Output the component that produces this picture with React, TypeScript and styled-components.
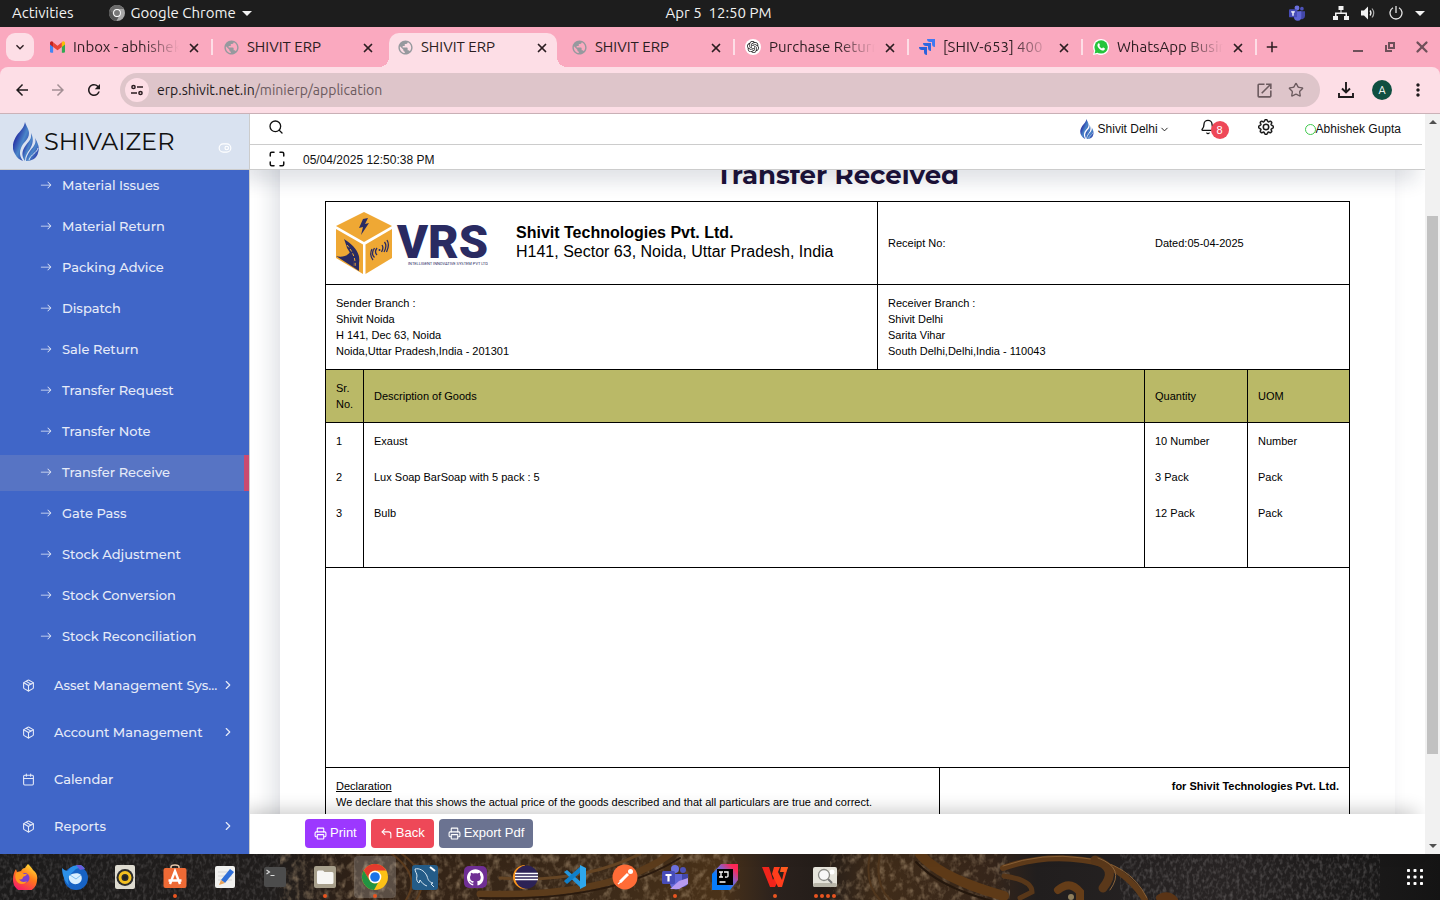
import React from "react";
import styled, { createGlobalStyle, css } from "styled-components";
import {
  Bell,
  Calendar,
  ChevronDown,
  ChevronRight,
  CornerUpLeft,
  Maximize,
  Package,
  Printer,
  Search,
  Star,
  ToggleRight,
  X,
} from "lucide-react";
import { BsArrowRight, BsGear } from "react-icons/bs";
import {
  MdArrowBack,
  MdArrowForward,
  MdMoreVert,
  MdOpenInNew,
  MdPublic,
  MdRefresh,
  MdAdd,
  MdExpandMore,
} from "react-icons/md";
import { SiGithub, SiOpenai } from "react-icons/si";

const systemFont = `Ubuntu, "Noto Sans", "Open Sans", sans-serif`;
const pageFont = `"Liberation Sans", Arial, sans-serif`;
const brandFont = `Montserrat, Inter, sans-serif`;

const GlobalStyle = createGlobalStyle`
  *, *::before, *::after { box-sizing: border-box; }
  body { margin: 0; background: #1d1d1d; font-family: ${pageFont}; }
  button { font: inherit; color: inherit; border: 0; padding: 0; background: none; cursor: pointer; }
  a { color: inherit; text-decoration: none; }
  svg { display: block; flex: none; }
  h1, p, ul { margin: 0; padding: 0; }
  ul { list-style: none; }
`;

const Desktop = styled.div`
  display: flex;
  flex-direction: column;
  height: 100vh;
  overflow: hidden;
`;

/* ---------- system bar ---------- */

const SystemBar = styled.header`
  display: grid;
  grid-template-columns: 1fr auto 1fr;
  align-items: center;
  height: 27px;
  flex: none;
  padding: 0 15px 1px 12px;
  background: #1d1d1d;
  color: #f2f2f2;
  font: 15px/20px ${systemFont};
  white-space: pre;
`;

const SystemGroup = styled.div<{ $end?: boolean }>`
  display: flex;
  align-items: center;
  gap: ${(p) => (p.$end ? "12px" : "35px")};
  justify-content: ${(p) => (p.$end ? "flex-end" : "flex-start")};
`;

const SystemButton = styled.button`
  display: flex;
  align-items: center;
  gap: 6px;
`;

const TeamsSlot = styled.span`
  margin-right: 16px;
`;

/* ---------- browser ---------- */

const TabStrip = styled.div`
  display: flex;
  align-items: center;
  height: 40px;
  flex: none;
  padding: 0 12px 0 6px;
  background: #faa9bf;
  color: #2b1d21;
  font: 15px/20px ${systemFont};
`;

const TabSearch = styled.button`
  display: grid;
  place-items: center;
  width: 28px;
  height: 28px;
  margin-right: 6px;
  border-radius: 9px;
  background: #fddee6;
`;

const TabItem = styled.div<{ $active?: boolean; $divider?: boolean }>`
  position: relative;
  display: flex;
  align-items: center;
  gap: 8px;
  flex: 0 1 174px;
  min-width: 0;
  height: 40px;
  padding: 0 15px 0 9px;
  isolation: isolate;
  ${(p) =>
    p.$active &&
    css`
      &::before {
        content: "";
        position: absolute;
        z-index: -1;
        inset: 6px 5px 0 1px;
        border-radius: 10px 10px 0 0;
        background: #fddee6;
      }
      &::after {
        content: "";
        position: absolute;
        z-index: -1;
        left: -9px;
        right: -5px;
        bottom: 0;
        height: 10px;
        background:
          radial-gradient(circle at 0 0, transparent 10px, #fddee6 10px) left / 10px 10px no-repeat,
          radial-gradient(circle at 100% 0, transparent 10px, #fddee6 10px) right / 10px 10px no-repeat;
      }
    `}
  ${(p) =>
    p.$divider &&
    css`
      &::after {
        content: "";
        position: absolute;
        right: 1px;
        top: 12px;
        width: 2px;
        height: 16px;
        background: #fddee6;
      }
    `}
`;

const TabTitle = styled.button<{ $fade?: boolean }>`
  flex: 1;
  min-width: 0;
  overflow: hidden;
  text-align: left;
  white-space: nowrap;
  ${(p) => p.$fade && css`mask-image: linear-gradient(90deg, #000 65%, transparent 100%);`}
`;

const TabIcon = styled.span`
  display: grid;
  place-items: center;
  width: 16px;
  height: 16px;
  flex: none;
  color: #96999e;
`;

const IconButton = styled.button<{ $size?: number; $faded?: boolean }>`
  display: grid;
  place-items: center;
  flex: none;
  width: ${(p) => p.$size ?? 20}px;
  height: ${(p) => p.$size ?? 20}px;
  opacity: ${(p) => (p.$faded ? 0.4 : 1)};
`;

const NewTab = styled(IconButton)`
  margin-left: 4px;
  svg { stroke: none; }
`;

const WindowControls = styled.div`
  display: flex;
  gap: 12px;
  margin-left: auto;
  margin-right: -4px;
  color: #6e5059;
`;

const ToolbarBack = styled.div`
  flex: none;
  background: #faa9bf;
`;

const Toolbar = styled.div`
  display: flex;
  align-items: center;
  height: 47px;
  padding: 0 12px;
  border-bottom: 1px solid #cbb2b8;
  border-radius: 8px 8px 0 0;
  background: #fddee6;
  color: #1f1a1c;
`;

const NavButtons = styled.div`
  display: flex;
  gap: 16px;
  margin-right: 16px;
`;

const AddressBar = styled.div`
  display: flex;
  align-items: center;
  flex: 1;
  min-width: 0;
  height: 34px;
  padding: 0 14px 0 5px;
  border-radius: 17px;
  background: #dec5ca;
  font: 14px/20px ${systemFont};
`;

const SiteInfo = styled.button`
  display: grid;
  place-items: center;
  width: 24px;
  height: 24px;
  margin-right: 8px;
  border-radius: 50%;
  background: #fddee6;
`;

const Address = styled.a`
  flex: 1;
  min-width: 0;
  overflow: hidden;
  white-space: nowrap;
  span { color: #6b5a5e; }
`;

const AddressActions = styled.div`
  display: flex;
  gap: 12px;
  color: #6b5a5e;
`;

const ToolbarActions = styled.div`
  display: flex;
  align-items: center;
  gap: 16px;
  margin-left: 16px;
`;

const ProfileButton = styled.button`
  width: 20px;
  height: 20px;
  border-radius: 50%;
  background: #0f4f41;
  color: #fff;
  font: 11px/20px ${systemFont};
`;

/* ---------- application ---------- */

const Viewport = styled.div`
  display: flex;
  flex: 1;
  min-height: 0;
  background: #fff;
`;

const Sidebar = styled.aside`
  position: relative;
  z-index: 3;
  display: flex;
  flex-direction: column;
  width: 250px;
  flex: none;
  overflow: hidden;
  border-right: 1px solid #ccc;
  background: #4066c8;
  color: #e6ebf8;
`;

const Brand = styled.div`
  position: relative;
  z-index: 1;
  display: flex;
  align-items: center;
  height: 56px;
  flex: none;
  padding: 0 17px 0 13px;
  border-bottom: 1px solid #ccc;
  background: #d9e2f0;
`;

const BrandName = styled.a`
  flex: 1;
  padding-left: 5px;
  color: #111;
  font: 400 24px/32px ${brandFont};
`;

const CollapseButton = styled.button`
  align-self: flex-end;
  margin-bottom: 14px;
  color: #fff;
`;

const Menu = styled.ul`
  display: flex;
  flex-direction: column;
  gap: 5px;
  font: 500 13px/18px ${brandFont};
`;

const SubMenu = styled(Menu)`
  margin-top: -2px;
  margin-bottom: 10px;
`;

const SubLink = styled.a<{ $active?: boolean }>`
  display: flex;
  align-items: center;
  gap: 10px;
  height: 36px;
  padding: 0 0 2px 40px;
  border-right: 5px solid ${(p) => (p.$active ? "#cb4a70" : "transparent")};
  background: ${(p) => (p.$active ? "#5774c4" : "transparent")};
`;

const MainLink = styled.a`
  display: flex;
  align-items: center;
  height: 42px;
  padding: 0 14px 2px 22px;
  span {
    flex: 1;
    min-width: 0;
    padding-left: 19px;
    overflow: hidden;
    white-space: nowrap;
    text-overflow: ellipsis;
  }
`;

const Main = styled.main`
  position: relative;
  display: flex;
  flex-direction: column;
  flex: 1;
  min-width: 0;
`;

const AppHeader = styled.div`
  position: relative;
  z-index: 2;
  height: 56px;
  flex: none;
  border-bottom: 1px solid #ccc;
  background: #fff;
  box-shadow: -8px 12px 18px 0 rgba(25, 42, 70, 0.13);
  color: #111;
  font-size: 12px;
  line-height: 16px;
`;

const HeaderRow = styled.div<{ $second?: boolean }>`
  display: flex;
  align-items: center;
  height: ${(p) => (p.$second ? "24px" : "31px")};
  margin-right: 3px;
  padding: ${(p) => (p.$second ? "6px 0 0 18px" : "0 21px 0 18px")};
  gap: ${(p) => (p.$second ? "19px" : "0")};
  border-bottom: ${(p) => (p.$second ? "0" : "1px solid #ccc")};
`;

const HeaderTools = styled.div`
  display: flex;
  align-items: center;
  margin-left: auto;
`;

const HeaderIcon = styled(IconButton)`
  position: relative;
  width: 16px;
  height: 16px;
  margin-bottom: 4px;
`;

const BranchButton = styled.button`
  display: flex;
  align-items: center;
  gap: 4px;
  margin-right: 30px;
  span { display: flex; align-items: center; gap: 1px; }
`;

const BellButton = styled(HeaderIcon)`
  margin-right: 42px;
`;

const Badge = styled.span`
  position: absolute;
  left: 11px;
  top: 2px;
  width: 18px;
  height: 18px;
  border-radius: 50%;
  background: #ee4858;
  color: #fff;
  font-size: 11px;
  line-height: 18px;
`;

const UserButton = styled.button`
  display: flex;
  align-items: center;
  margin-left: 31px;
  &::before {
    content: "";
    width: 11px;
    height: 11px;
    border: 1px solid #3fc94d;
    border-radius: 50%;
  }
`;

const Scroll = styled.div`
  flex: 1;
  min-height: 0;
  overflow: hidden;
`;

const Sheet = styled.section`
  margin: -40px 30px 0;
  padding: 29px 45px 40px;
  background: #fff;
  box-shadow: -8px 12px 18px 0 rgba(25, 42, 70, 0.13);
  color: #000;
  font-size: 11px;
  line-height: 16px;
`;

const SheetTitle = styled.h1`
  margin-bottom: 10px;
  color: #1b1036;
  text-align: center;
  font: 700 26px/32px ${brandFont};
`;

const Voucher = styled.div`
  border: 1px solid #000;
`;

const Split = styled.div<{ $cols: string }>`
  display: grid;
  grid-template-columns: ${(p) => p.$cols};
`;

const Cell = styled.div<{ $divided?: boolean; $ruled?: boolean; $right?: boolean }>`
  padding: 10px;
  border-right: ${(p) => (p.$divided ? "1px solid #000" : "0")};
  border-bottom: ${(p) => (p.$ruled ? "1px solid #000" : "0")};
  text-align: ${(p) => (p.$right ? "right" : "left")};
`;

const CompanyCell = styled(Cell)`
  display: flex;
  align-items: center;
  gap: 28px;
  font-size: 16px;
  line-height: 19px;
  p { padding-bottom: 2px; }
`;

const ReceiptCell = styled(Cell)`
  display: grid;
  grid-template-columns: 267fr 184fr;
  align-items: center;
`;

const Items = styled.table`
  width: 100%;
  table-layout: fixed;
  border-spacing: 0;
  th, td {
    padding: 10px;
    border-right: 1px solid #000;
    text-align: left;
    vertical-align: middle;
    font-weight: 400;
  }
  th:last-child, td:last-child { border-right: 0; }
  th { background: #bab967; border-bottom: 1px solid #000; }
  tbody tr:last-child td { padding-bottom: 46px; border-bottom: 1px solid #000; }
`;

const Col = styled.col<{ $width?: number }>`
  width: ${(p) => (p.$width ? `${p.$width}px` : "auto")};
`;

const Blank = styled.div`
  height: 200px;
  border-bottom: 1px solid #000;
`;

const ActionBar = styled.footer`
  position: relative;
  z-index: 2;
  display: flex;
  align-items: center;
  gap: 5px;
  height: 40px;
  flex: none;
  padding: 0 55px 2px;
  background: #fff;
  box-shadow: -8px -4px 18px 0 rgba(0, 0, 0, 0.2);
`;

const ActionButton = styled.button<{ $color: string }>`
  display: flex;
  align-items: center;
  gap: 3px;
  height: 29px;
  padding: 0 9px;
  border-radius: 4px;
  background: ${(p) => p.$color};
  color: #fff;
  font-size: 13px;
  line-height: 16px;
`;

const ScrollTrack = styled.div`
  position: relative;
  z-index: 3;
  display: flex;
  flex-direction: column;
  align-items: center;
  justify-content: space-between;
  width: 15px;
  flex: none;
  padding: 6px 0;
  background: #f1f1f1;
`;

const ThumbLane = styled.div`
  display: grid;
  grid-template-rows: 87fr 538fr 85fr;
  flex: 1;
  width: 11px;
  margin: 5px 0;
  &::before {
    content: "";
    grid-row: 2;
    background: #c1c1c1;
  }
`;

/* ---------- dock ---------- */

const Dock = styled.nav`
  position: relative;
  display: flex;
  align-items: center;
  justify-content: space-between;
  height: 46px;
  flex: none;
  padding-right: 15px;
  background: #1a1816;
  isolation: isolate;
`;

const Wallpaper = styled.svg`
  position: absolute;
  z-index: -1;
  inset: 0;
  width: 100%;
  height: 100%;
`;

const DockApps = styled.div`
  display: flex;
`;

const DockApp = styled.button<{ $focused?: boolean }>`
  position: relative;
  display: grid;
  place-items: center;
  width: 42px;
  height: 42px;
  margin: 0 4px;
  border-radius: 4px;
  background: ${(p) => (p.$focused ? "rgba(255,255,255,.2)" : "none")};
`;

const RunningDots = styled.span`
  position: absolute;
  bottom: 0;
  left: 0;
  right: 0;
  display: flex;
  justify-content: center;
  gap: 2px;
  i {
    width: 4px;
    height: 4px;
    border-radius: 50%;
    background: #e95420;
  }
`;

/* ---------- drawings ---------- */

const Caret = ({ w = 10, color = "#f2f2f2", up = false }) => (
  <svg width={w} height={w / 2} viewBox="0 0 10 5" aria-hidden>
    <path d={up ? "M0 5h10L5 0z" : "M0 0h10L5 5z"} fill={color} />
  </svg>
);

const Flame = ({ w, h, id }: { w: number; h: number; id: string }) => (
  <svg width={w} height={h} viewBox="0 0 26 39" aria-hidden>
    <defs>
      <linearGradient id={id} x1="0" y1="0" x2="1" y2="1">
        <stop offset="0" stopColor="#1a0a96" />
        <stop offset=".3" stopColor="#2a3aa8" />
        <stop offset=".55" stopColor="#4a86c9" />
        <stop offset="1" stopColor="#1c149a" />
      </linearGradient>
    </defs>
    <g fill={`url(#${id})`}>
      <path d="M12 0c-1 6-5 9-8 13-4 6-6 13-2 19 2 4 5 6 8 7-3-4-4-8-2-13 2-6 8-8 8-15 0-4-3-7-4-11z" />
      <path d="M18 11c1 6-2 8-5 12-4 5-5 11-1 16 0-5 2-8 5-12 3-5 4-10 1-16z" />
      <path d="M22 16c2 6-2 9-5 13-2 3-4 6-4 10 6 0 11-3 12-8 2-5 0-10-3-15z" />
    </g>
    <path d="M25 26c-1 5-7 6-9 12" stroke="#d9e2f0" strokeWidth="1" fill="none" />
  </svg>
);

const GmailIcon = () => (
  <svg width="15" height="12" viewBox="0 0 24 18" aria-hidden>
    <path d="M0 3v13q0 2 2 2h3V6z" fill="#4285f4" />
    <path d="M24 3v13q0 2-2 2h-3V6z" fill="#34a853" />
    <path d="M5 1.500l7 5.500 7-5.500V9l-7 5-7-5z" fill="#ea4335" />
    <path d="M0 3c0-3 3-4 5-2v8L0 5z" fill="#c5221f" />
    <path d="M24 3c0-3-3-4-5-2v8l5-4z" fill="#fbbc04" />
  </svg>
);

const JiraIcon = () => (
  <svg width="16" height="16" viewBox="0 0 16 16" aria-hidden>
    <path d="M8 0h8v8a3 3 0 0 1-3-3V3h-2a3 3 0 0 1-3-3z" fill="#3f78f2" />
    <path d="M4 4h8v8a3 3 0 0 1-3-3V7H7a3 3 0 0 1-3-3z" fill="#2f68e0" />
    <path d="M0 8h8v8a3 3 0 0 1-3-3v-2H3a3 3 0 0 1-3-3z" fill="#2a62db" />
  </svg>
);

const RoundIcon = styled.span<{ $color: string }>`
  display: grid;
  place-items: center;
  width: 16px;
  height: 16px;
  border-radius: 50%;
  background: #fff;
  color: ${(p) => p.$color};
`;

const WhatsAppIcon = () => (
  <svg width="16" height="16" viewBox="0 0 16 16" aria-hidden>
    <path d="M8 0a8 8 0 1 1-3.800 15L0 16l1.100-4A8 8 0 0 1 8 0z" fill="#fff" />
    <circle cx="8.100" cy="7.900" r="6.700" fill="#25c43c" />
    <path d="m1.600 14.400.9-3.400 2.500 2.500z" fill="#25c43c" />
    <path d="M5.800 4.200c.8 0 1 1.700 1.200 1.900l-.7 1c.6 1.200 1.500 2 2.700 2.500l.9-1c.3-.1 2 .7 2 .9 0 1.800-1.500 2.400-2.800 2C6.600 10.600 5 8.700 4.500 7c-.2-1.300.4-2.600 1.300-2.800z" fill="#fff" />
  </svg>
);

const ChromeIcon = ({ size, mono = false }: { size: number; mono?: boolean }) => (
  <svg width={size} height={size} viewBox="0 0 26 26" aria-hidden>
    <circle cx="13" cy="13" r="13" fill={mono ? "#a8a8a8" : "#fbc116"} />
    <path d="M1.700 6.500A13 13 0 0 1 24.300 6.500H13a6.500 6.500 0 0 0-5.600 9.700z" fill={mono ? "#6c6c6c" : "#e33b2e"} />
    <path d="M1.700 6.500 7.400 16.300a6.500 6.500 0 0 0 8.600 2.500L12 26A13 13 0 0 1 1.700 6.500z" fill={mono ? "#555" : "#229342"} />
    <circle cx="13" cy="13" r="6.300" fill="#fff" />
    <circle cx="13" cy="13" r="4.800" fill={mono ? "#777" : "#1a73e8"} />
  </svg>
);

const TeamsIcon = ({ size, badge = false }: { size: number; badge?: boolean }) => (
  <svg width={size} height={size} viewBox="0 0 26 26" aria-hidden>
    <circle cx="13" cy="5" r="4" fill="#6b70dd" />
    <circle cx="21" cy="6" r="3" fill="#4d52b8" />
    <path d="M17 10h9v8a5 5 0 0 1-9 3z" fill="#4247a8" />
    <path d="M8 10h12v9a6 6 0 0 1-12 1z" fill="#5f64d6" />
    <rect y="7" width="13" height="13" rx="1.500" fill="#474cb8" />
    <path d="M3.500 10h6v2H7.600v5.500H5.400V12H3.500z" fill="#fff" />
    {badge && <path d="M8 25 17 17l9-3v6l-9 5z" fill="#b79af0" />}
  </svg>
);

const NetworkIcon = () => (
  <svg width="16" height="14" viewBox="0 0 16 14" fill="#f2f2f2" aria-hidden>
    <path d="M5.500 0h5v4h-2v2.500H14V10h2v4h-5v-4h1.500V8h-9v2H5v4H0v-4h2V6.500h5.500V4h-2z" />
  </svg>
);

const VolumeIcon = () => (
  <svg width="16" height="14" viewBox="0 0 16 14" aria-hidden>
    <path d="M0 4.500h3L7 .5v13l-4-4H0z" fill="#f2f2f2" />
    <path d="M9 4.500q2 2.500 0 5" stroke="#f2f2f2" fill="none" strokeWidth="1.300" />
    <path d="M11 2.500q3.500 4.500 0 9" stroke="#aaa" fill="none" strokeWidth="1.200" />
  </svg>
);

const PowerIcon = () => (
  <svg width="14" height="14" viewBox="0 0 14 14" stroke="#e6e6e6" strokeWidth="1.300" fill="none" aria-hidden>
    <path d="M4 1.800a6 6 0 1 0 6 0M7 0v7" />
  </svg>
);

const TuneIcon = () => (
  <svg width="12" height="12" viewBox="0 0 12 12" stroke="#2b1d21" strokeWidth="1.500" fill="none" aria-hidden>
    <circle cx="2.500" cy="3" r="1.600" />
    <path d="M6 3h6M0 9h6" />
    <circle cx="9.500" cy="9" r="1.600" />
  </svg>
);

const MinimizeIcon = () => (
  <svg width="10" height="12" viewBox="0 0 10 12" stroke="currentColor" strokeWidth="2" aria-hidden>
    <path d="M0 10h10" />
  </svg>
);

const RestoreIcon = () => (
  <svg width="10" height="10" viewBox="0 0 10 10" stroke="currentColor" strokeWidth="2" fill="none" aria-hidden>
    <path d="M4 1h5v5H4zM1 3v6h6" />
  </svg>
);

const VrsLogo = () => (
  <svg width="152" height="62" viewBox="0 0 152 62" role="img" aria-label="VRS">
    <g fill="#efa834">
      <path d="M28 0 56 14 28 30 0 14z" />
      <path d="M0 17 27 32.500V62L0 46z" />
      <path d="M56 17 29.500 32.500V62L56 46z" />
    </g>
    <g fill="#2a2b62">
      <path d="m27 7 5-1-3 6 4-1-8 12 2-8-4 1z" />
      <path d="M8 27c9 6 17 13 15 24v8l-6-4c2-8-3-14-6-19-1-4-2-6-3-9z" />
      <path d="M0 44c5 2 12 0 14-4 3 4 5 9 3 15z" />
    </g>
    <path d="M11 33c6 7 9 14 8 23" stroke="#efa834" strokeWidth="1" fill="none" strokeDasharray="3 2" />
    <g stroke="#2a2b62" strokeWidth="1.300" fill="none">
      <path d="M41 36q-3 4 0 7M38.500 36q-4 6 0 9.500M36 37q-3 6 1 11M46 33q2 3-.5 7M48.500 30q3 4-.5 10M51 28q3 5-.5 12" />
    </g>
    <circle cx="43.500" cy="38" r="1" fill="#2a2b62" />
    <text x="61" y="46" fontFamily="Roboto, sans-serif" fontWeight="900" fontSize="47" fill="#2a2b62">VRS</text>
    <text x="72" y="53" fontFamily="Roboto, sans-serif" fontWeight="400" fontSize="4" fill="#2a2b62">INTELLIGENT INNOVATIVE SYSTEM PVT LTD.</text>
  </svg>
);

const art = (children: React.ReactNode) => (
  <svg width="26" height="26" viewBox="0 0 26 26" aria-hidden>
    {children}
  </svg>
);

const FirefoxIcon = () =>
  art(
    <>
      <defs>
        <linearGradient id="fox" x1=".8" y1="0" x2=".3" y2="1">
          <stop offset="0" stopColor="#ffe53b" />
          <stop offset=".45" stopColor="#ff7a1a" />
          <stop offset="1" stopColor="#f5156c" />
        </linearGradient>
      </defs>
      <path d="M16 0c2 2 4 4 5 6 3 2 5 6 4 10a12 12 0 0 1-24 0C1 11 2 8 4 5l1 3 4-1c1-2 2-3 4-3 1-2 2-3 3-4z" fill="url(#fox)" />
      <circle cx="12.500" cy="14" r="5" fill="#7a3fd0" />
      <path d="M4 9c3-2 6-1 8 1h3c-1 2-3 2-4 3 0 2-2 3-4 2 1 3 5 4 8 2-2 4-9 4-11-1-1-3-1-5 0-7z" fill="#ff9a1f" />
    </>,
  );

const ThunderbirdIcon = () =>
  art(
    <>
      <circle cx="14" cy="14" r="12" fill="#1763c4" />
      <path d="M0 4c2 2 4 3 6 3 2-4 6-6 11-6 3 0 5 2 6 4-5-2-9-1-11 2-5 4-7 8-5 14C3 18 0 11 0 4z" fill="#2b8fe8" />
      <path d="M14 1h5l4 4-5 1z" fill="#6c5bd8" />
      <path d="M7 12c2-3 10-4 12-1 2 4 0 8-4 9-5 1-9-3-8-8z" fill="#d9efff" />
      <path d="m8 11 6 4 5-4" stroke="#7fbdf0" fill="none" />
    </>,
  );

const RhythmboxIcon = () =>
  art(
    <>
      <rect x="3" y="1" width="20" height="24" rx="2" fill="#dedbd0" />
      <circle cx="13" cy="13.500" r="8.500" fill="#2c2c2c" />
      <circle cx="13" cy="13.500" r="5" fill="none" stroke="#f4c020" strokeWidth="3" />
      <circle cx="13" cy="13.500" r="2" fill="#222" />
    </>,
  );

const SoftwareIcon = () =>
  art(
    <>
      <path d="M9 5V3q0-2 4-2t4 2v2" stroke="#e8c9ad" strokeWidth="1.500" fill="none" />
      <rect x="1.500" y="4" width="23" height="20" rx="2" fill="#ee6a35" />
      <path d="m8 20 5-13 5 13M6.500 16.500h13" stroke="#fff" strokeWidth="2.400" fill="none" />
    </>,
  );

const EditorIcon = () =>
  art(
    <>
      <rect x="3" y="2" width="20" height="22" rx="2" fill="#f1f1ef" />
      <path d="M6 8h14M6 12h14M6 16h14" stroke="#d5d5d5" />
      <path d="m9 16 9-11 4 3-9 11z" fill="#2f6fd8" />
      <path d="m9 16 4 3-6 2z" fill="#e8a35b" />
    </>,
  );

const TerminalIcon = () =>
  art(
    <>
      <rect x="2" y="3" width="22" height="20" rx="2" fill="#4c4c4c" />
      <path d="m4.500 6 3 2-3 2M8.500 11.500h4" stroke="#ddd" fill="none" strokeWidth="1.100" />
    </>,
  );

const FilesIcon = () =>
  art(
    <>
      <rect x="2" y="2" width="22" height="22" rx="2" fill="#a8a08c" />
      <path d="M5 8q0-1.500 1.500-1.500H11l1.500 1.500H20q1.500 0 1.500 1.500v9q0 1.500-1.500 1.500H6.500Q5 20 5 18.500z" fill="#f7f6f3" />
    </>,
  );

const WorkbenchIcon = () =>
  art(
    <>
      <rect x="0" y="1" width="26" height="25" rx="3" fill="#245c88" />
      <path d="M3 5c4-1 9 1 12 7 1 4 2 6 6 7l-2 1 3 3M3 5c0 3 2 4 2 7-1 3 0 6 2 7l1-3c2 3 4 5 7 6" stroke="#d7e6f1" fill="none" />
      <path d="m18 3 5 4" stroke="#fff" strokeWidth="2" />
    </>,
  );

const EclipseIcon = () =>
  art(
    <>
      <path d="M13 1a12 12 0 0 0 0 24L9 13z" fill="#f7941e" />
      <circle cx="14.500" cy="13" r="11.500" fill="#2c2255" />
      <path d="M3 9.500h23M3 12.500h23M3 15.500h23" stroke="#fff" strokeWidth="1.300" />
    </>,
  );

const CodeIcon = () =>
  art(
    <>
      <path d="M2 8 5 6l14 12v6z" fill="#2496dd" />
      <path d="m2 17 3 3L19 8V2z" fill="#0f7fc9" />
      <path d="m18 1 6 3v18l-6 3z" fill="#2ea8ee" />
    </>,
  );

const PostmanIcon = () =>
  art(
    <>
      <circle cx="13" cy="13" r="12.500" fill="#ff6c37" />
      <path d="m8 18 8-8" stroke="#fff" strokeWidth="3" />
      <path d="m6 20 5-4" stroke="#fff" strokeWidth="1.500" />
      <circle cx="18.500" cy="7.500" r="2.500" fill="#fff" />
    </>,
  );

const IdeaIcon = () =>
  art(
    <>
      <defs>
        <linearGradient id="idea" x1="0" y1="1" x2="1" y2="0">
          <stop offset=".35" stopColor="#087cfa" />
          <stop offset=".6" stopColor="#8b5fc7" />
          <stop offset=".85" stopColor="#fe2857" />
        </linearGradient>
      </defs>
      <path d="M9 0h17v16l-8 10H0V10z" fill="url(#idea)" />
      <rect x="5" y="5" width="16" height="16" fill="#000" />
      <path d="M7 8h4M9 8v5M7 13h4M12 8h4v4q0 1.500-3 1M7.500 18h6" stroke="#fff" strokeWidth="1.300" fill="none" />
    </>,
  );

const WpsIcon = () =>
  art(
    <>
      <path d="M0 3h7l4 13 3-6 3 5-4 8H8z" fill="#f0241b" />
      <path d="M12 3h6l-2 5 4 8 3-13h3l-6 20h-4l-6-13z" fill="#ff3d1c" />
      <path d="M19 3h7l-2 5h-6z" fill="#ff5a1e" />
    </>,
  );

const ViewerIcon = () =>
  art(
    <>
      <rect x="1" y="3" width="24" height="20" rx="2" fill="#e6e4db" />
      <rect x="1" y="19" width="24" height="4" rx="2" fill="#b9b6a9" />
      <circle cx="20" cy="8" r="2.500" fill="#fff" />
      <circle cx="12" cy="11" r="5.500" fill="#f8f8f8" stroke="#8b8b86" strokeWidth="1.300" />
      <path d="m16 15 4 4" stroke="#777" strokeWidth="2" />
    </>,
  );

const GithubDesktopIcon = () =>
  art(
    <>
      <rect x="2" y="2" width="23" height="22" rx="5" fill="#6f2f94" />
      <g transform="translate(5 5) scale(.7)">
        <SiGithub size={24} color="#fff" />
      </g>
    </>,
  );

const GridIcon = () => (
  <svg width="18" height="18" viewBox="0 0 18 18" fill="#fff" aria-hidden>
    {[1, 7.5, 14].map((y) => [1, 7.5, 14].map((x) => <rect key={`${x}-${y}`} x={x} y={y} width="3" height="3" rx=".8" />))}
  </svg>
);

const CarvedBackdrop = () => (
  <Wallpaper viewBox="0 0 1440 46" preserveAspectRatio="none" aria-hidden>
    <defs>
      <linearGradient id="wood">
        <stop offset="0" stopColor="#1c1b1b" />
        <stop offset=".19" stopColor="#201d1c" />
        <stop offset=".25" stopColor="#302116" />
        <stop offset=".42" stopColor="#3c2a19" />
        <stop offset=".5" stopColor="#4a3219" />
        <stop offset=".54" stopColor="#2a211d" />
        <stop offset=".57" stopColor="#241d19" />
        <stop offset=".61" stopColor="#402c19" />
        <stop offset=".69" stopColor="#35251a" />
        <stop offset=".72" stopColor="#211e1e" />
        <stop offset=".85" stopColor="#282424" />
        <stop offset="1" stopColor="#141414" />
      </linearGradient>
      <filter id="grain" x="0" y="0" width="100%" height="100%">
        <feTurbulence type="fractalNoise" baseFrequency=".14 .11" numOctaves="3" seed="4" />
        <feColorMatrix values="0 0 0 0 .5  0 0 0 0 .36  0 0 0 0 .22  2.400 0 0 0 -1.100" />
      </filter>
      <filter id="leather" x="0" y="0" width="100%" height="100%">
        <feTurbulence type="fractalNoise" baseFrequency=".3 .2" numOctaves="2" seed="9" />
        <feColorMatrix values="0 0 0 0 .35  0 0 0 0 .33  0 0 0 0 .33  1.600 0 0 0 -.7" />
      </filter>
    </defs>
    <rect width="1440" height="46" fill="url(#wood)" />
    <rect width="280" height="46" filter="url(#leather)" opacity=".4" />
    <rect x="1120" width="260" height="46" filter="url(#leather)" opacity=".5" />
    <rect x="280" width="460" height="46" filter="url(#grain)" opacity=".55" />
    <rect x="830" width="180" height="46" filter="url(#grain)" opacity=".55" />
    <g fill="none" strokeLinecap="round">
      <path d="M392 0q30 22 14 46M402 0q30 22 14 46" stroke="#5c3c1f" strokeWidth="2" />
      <path d="M480 40q130 4 190-40" stroke="#5c3c1c" strokeWidth="7" />
      <path d="M480 44q130 4 200-40" stroke="#2a1a0e" strokeWidth="2" />
      <path d="M500 24q80 6 140-24" stroke="#654524" strokeWidth="3" />
      <path d="M870 0q-6 30 10 46M880 0q-6 30 10 46" stroke="#50361d" strokeWidth="2" />
      <path d="M920 0q20 24 84 42" stroke="#5e3a17" strokeWidth="10" />
      <path d="M916 8q24 26 80 40" stroke="#24170d" strokeWidth="2" />
      <path d="M1003 14q40-14 80-8 40 4 62 40" stroke="#5f3b1a" strokeWidth="6" />
      <path d="M1003 12q40-14 80-8 46 4 64 40" stroke="#8a6034" strokeWidth="1" />
      <path d="M1095 6q24 8 8 28" stroke="#5a381a" strokeWidth="9" />
      <path d="M1098 4q28 10 12 32" stroke="#8a643c" strokeWidth="1" />
      <path d="M1004 22q28 4 28 16l-12 6" stroke="#583719" strokeWidth="5" />
      <path d="M1058 36q12-10 22 2v10" stroke="#653d18" strokeWidth="8" />
      <circle cx="1071" cy="43" r="3" fill="#8f7f5c" />
      <path d="M1160 44q8-4 14 2" stroke="#5a3416" strokeWidth="8" />
    </g>
  </Wallpaper>
);

/* ---------- data ---------- */

const tabs = [
  { title: "Inbox - abhishek", icon: <GmailIcon />, divider: true, fade: true },
  { title: "SHIVIT ERP", icon: <MdPublic size={17} /> },
  { title: "SHIVIT ERP", icon: <MdPublic size={17} />, active: true },
  { title: "SHIVIT ERP", icon: <MdPublic size={17} />, divider: true },
  { title: "Purchase Return", icon: <RoundIcon $color="#222"><SiOpenai size={12} /></RoundIcon>, divider: true, fade: true },
  { title: "[SHIV-653] 400", icon: <JiraIcon />, divider: true, fade: true },
  { title: "WhatsApp Busin", icon: <WhatsAppIcon />, divider: true, fade: true },
];

const subLinks = [
  "Material Issues",
  "Material Return",
  "Packing Advice",
  "Dispatch",
  "Sale Return",
  "Transfer Request",
  "Transfer Note",
  "Transfer Receive",
  "Gate Pass",
  "Stock Adjustment",
  "Stock Conversion",
  "Stock Reconciliation",
];

const mainLinks = [
  { label: "Asset Management System", icon: Package, open: true },
  { label: "Account Management", icon: Package, open: true },
  { label: "Calendar", icon: Calendar, open: false },
  { label: "Reports", icon: Package, open: true },
];

const goods = [
  ["1", "Exaust", "10 Number", "Number"],
  ["2", "Lux Soap BarSoap with 5 pack : 5", "3 Pack", "Pack"],
  ["3", "Bulb", "12 Pack", "Pack"],
];

const dockApps = [
  { name: "Firefox", icon: <FirefoxIcon /> },
  { name: "Thunderbird", icon: <ThunderbirdIcon /> },
  { name: "Rhythmbox", icon: <RhythmboxIcon /> },
  { name: "Software", icon: <SoftwareIcon />, windows: 1 },
  { name: "Text Editor", icon: <EditorIcon /> },
  { name: "Terminal", icon: <TerminalIcon /> },
  { name: "Files", icon: <FilesIcon />, windows: 1 },
  { name: "Google Chrome", icon: <ChromeIcon size={26} />, windows: 1, focused: true },
  { name: "MySQL Workbench", icon: <WorkbenchIcon /> },
  { name: "GitHub Desktop", icon: <GithubDesktopIcon /> },
  { name: "Eclipse", icon: <EclipseIcon /> },
  { name: "Visual Studio Code", icon: <CodeIcon /> },
  { name: "Postman", icon: <PostmanIcon /> },
  { name: "Teams", icon: <TeamsIcon size={26} badge />, windows: 1 },
  { name: "IntelliJ IDEA", icon: <IdeaIcon /> },
  { name: "WPS Office", icon: <WpsIcon />, windows: 1 },
  { name: "Image Viewer", icon: <ViewerIcon />, windows: 4 },
];

/* ---------- page ---------- */

export default function App() {
  return (
    <Desktop>
      <GlobalStyle />
      <SystemBar>
        <SystemGroup>
          <SystemButton>Activities</SystemButton>
          <SystemButton>
            <ChromeIcon size={16} mono />
            Google Chrome
            <Caret />
          </SystemButton>
        </SystemGroup>
        <SystemButton>{"Apr 5  12:50 PM"}</SystemButton>
        <SystemGroup $end>
          <TeamsSlot><TeamsIcon size={16} /></TeamsSlot>
          <NetworkIcon />
          <VolumeIcon />
          <PowerIcon />
          <SystemButton aria-label="System menu"><Caret /></SystemButton>
        </SystemGroup>
      </SystemBar>

      <TabStrip>
        <TabSearch aria-label="Search tabs"><MdExpandMore size={16} /></TabSearch>
        {tabs.map((tab, i) => (
          <TabItem key={i} $active={tab.active} $divider={tab.divider}>
            <TabIcon>{tab.icon}</TabIcon>
            <TabTitle $fade={tab.fade}>{tab.title}</TabTitle>
            <IconButton $size={12} aria-label="Close tab"><X size={14} strokeWidth={3} /></IconButton>
          </TabItem>
        ))}
        <NewTab aria-label="New tab"><MdAdd size={18} /></NewTab>
        <WindowControls>
          <IconButton aria-label="Minimize"><MinimizeIcon /></IconButton>
          <IconButton aria-label="Restore"><RestoreIcon /></IconButton>
          <IconButton aria-label="Close"><X size={18} strokeWidth={3} /></IconButton>
        </WindowControls>
      </TabStrip>

      <ToolbarBack>
        <Toolbar>
          <NavButtons>
            <IconButton aria-label="Back"><MdArrowBack size={18} /></IconButton>
            <IconButton aria-label="Forward" $faded><MdArrowForward size={18} /></IconButton>
            <IconButton aria-label="Reload"><MdRefresh size={18} /></IconButton>
          </NavButtons>
          <AddressBar>
            <SiteInfo aria-label="Site information"><TuneIcon /></SiteInfo>
            <Address href="#">erp.shivit.net.in<span>/minierp/application</span></Address>
            <AddressActions>
              <IconButton aria-label="Open in app"><MdOpenInNew size={19} /></IconButton>
              <IconButton aria-label="Bookmark"><Star size={16} /></IconButton>
            </AddressActions>
          </AddressBar>
          <ToolbarActions>
            <IconButton aria-label="Downloads">
              <svg width="16" height="16" viewBox="0 0 16 16" stroke="currentColor" strokeWidth="1.900" fill="none" aria-hidden>
                <path d="M8 0v10M4 6.500l4 4 4-4M1 11v4h14v-4" />
              </svg>
            </IconButton>
            <ProfileButton>A</ProfileButton>
            <IconButton aria-label="More"><MdMoreVert size={20} /></IconButton>
          </ToolbarActions>
        </Toolbar>
      </ToolbarBack>

      <Viewport>
        <Sidebar>
          <Brand>
            <Flame w={26} h={39} id="flame-brand" />
            <BrandName href="#">SHIVAIZER</BrandName>
            <CollapseButton aria-label="Collapse menu"><ToggleRight size={14} /></CollapseButton>
          </Brand>
          <SubMenu>
            {subLinks.map((label) => (
              <li key={label}>
                <SubLink href="#" $active={label === "Transfer Receive"}>
                  <BsArrowRight size={12} />
                  {label}
                </SubLink>
              </li>
            ))}
          </SubMenu>
          <Menu>
            {mainLinks.map(({ label, icon: Icon, open }) => (
              <li key={label}>
                <MainLink href="#">
                  <Icon size={13} />
                  <span>{label}</span>
                  {open && <ChevronRight size={14} />}
                </MainLink>
              </li>
            ))}
          </Menu>
        </Sidebar>

        <Main>
          <AppHeader>
            <HeaderRow>
              <HeaderIcon aria-label="Search"><Search size={16} /></HeaderIcon>
              <HeaderTools>
                <BranchButton>
                  <Flame w={14} h={20} id="flame-branch" />
                  <span>Shivit Delhi<ChevronDown size={11} /></span>
                </BranchButton>
                <BellButton aria-label="Notifications">
                  <Bell size={16} />
                  <Badge>8</Badge>
                </BellButton>
                <HeaderIcon aria-label="Settings"><BsGear size={16} stroke="currentColor" strokeWidth={0.5} /></HeaderIcon>
                <UserButton>Abhishek Gupta</UserButton>
              </HeaderTools>
            </HeaderRow>
            <HeaderRow $second>
              <HeaderIcon aria-label="Full screen"><Maximize size={18} /></HeaderIcon>
              <time>05/04/2025 12:50:38 PM</time>
            </HeaderRow>
          </AppHeader>

          <Scroll>
            <Sheet>
              <SheetTitle>Transfer Received</SheetTitle>
              <Voucher>
                <Split $cols="552fr 471fr">
                  <CompanyCell $divided $ruled>
                    <VrsLogo />
                    <p>
                      <strong>Shivit Technologies Pvt. Ltd.</strong>
                      <br />
                      H141, Sector 63, Noida, Uttar Pradesh, India
                    </p>
                  </CompanyCell>
                  <ReceiptCell $ruled>
                    <span>Receipt No:</span>
                    <span>Dated:05-04-2025</span>
                  </ReceiptCell>
                  <Cell $divided $ruled>
                    Sender Branch :<br />
                    Shivit Noida<br />
                    H 141, Dec 63, Noida<br />
                    Noida,Uttar Pradesh,India - 201301
                  </Cell>
                  <Cell $ruled>
                    Receiver Branch :<br />
                    Shivit Delhi<br />
                    Sarita Vihar<br />
                    South Delhi,Delhi,India - 110043
                  </Cell>
                </Split>
                <Items>
                  <colgroup>
                    <Col $width={38} />
                    <Col />
                    <Col $width={103} />
                    <Col $width={101} />
                  </colgroup>
                  <thead>
                    <tr>
                      <th>Sr. No.</th>
                      <th>Description of Goods</th>
                      <th>Quantity</th>
                      <th>UOM</th>
                    </tr>
                  </thead>
                  <tbody>
                    {goods.map((row) => (
                      <tr key={row[0]}>
                        {row.map((value, i) => <td key={i}>{value}</td>)}
                      </tr>
                    ))}
                  </tbody>
                </Items>
                <Blank />
                <Split $cols="614fr 409fr">
                  <Cell $divided>
                    <u>Declaration</u>
                    <br />
                    We declare that this shows the actual price of the goods described and that all particulars are true and correct.
                  </Cell>
                  <Cell $right>
                    <strong>for Shivit Technologies Pvt. Ltd.</strong>
                  </Cell>
                </Split>
              </Voucher>
            </Sheet>
          </Scroll>

          <ActionBar>
            <ActionButton $color="#9c38ff"><Printer size={13} />Print</ActionButton>
            <ActionButton $color="#ee4858"><CornerUpLeft size={13} />Back</ActionButton>
            <ActionButton $color="#6b7391"><Printer size={13} />Export Pdf</ActionButton>
          </ActionBar>
        </Main>

        <ScrollTrack>
          <Caret w={8} color="#505050" up />
          <ThumbLane />
          <Caret w={8} color="#505050" />
        </ScrollTrack>
      </Viewport>

      <Dock>
        <CarvedBackdrop />
        <DockApps>
          {dockApps.map((app) => (
            <DockApp key={app.name} aria-label={app.name} $focused={app.focused}>
              {app.icon}
              {app.windows && (
                <RunningDots>
                  {Array.from({ length: app.windows }, (_, i) => <i key={i} />)}
                </RunningDots>
              )}
            </DockApp>
          ))}
        </DockApps>
        <IconButton aria-label="Show applications"><GridIcon /></IconButton>
      </Dock>
    </Desktop>
  );
}
